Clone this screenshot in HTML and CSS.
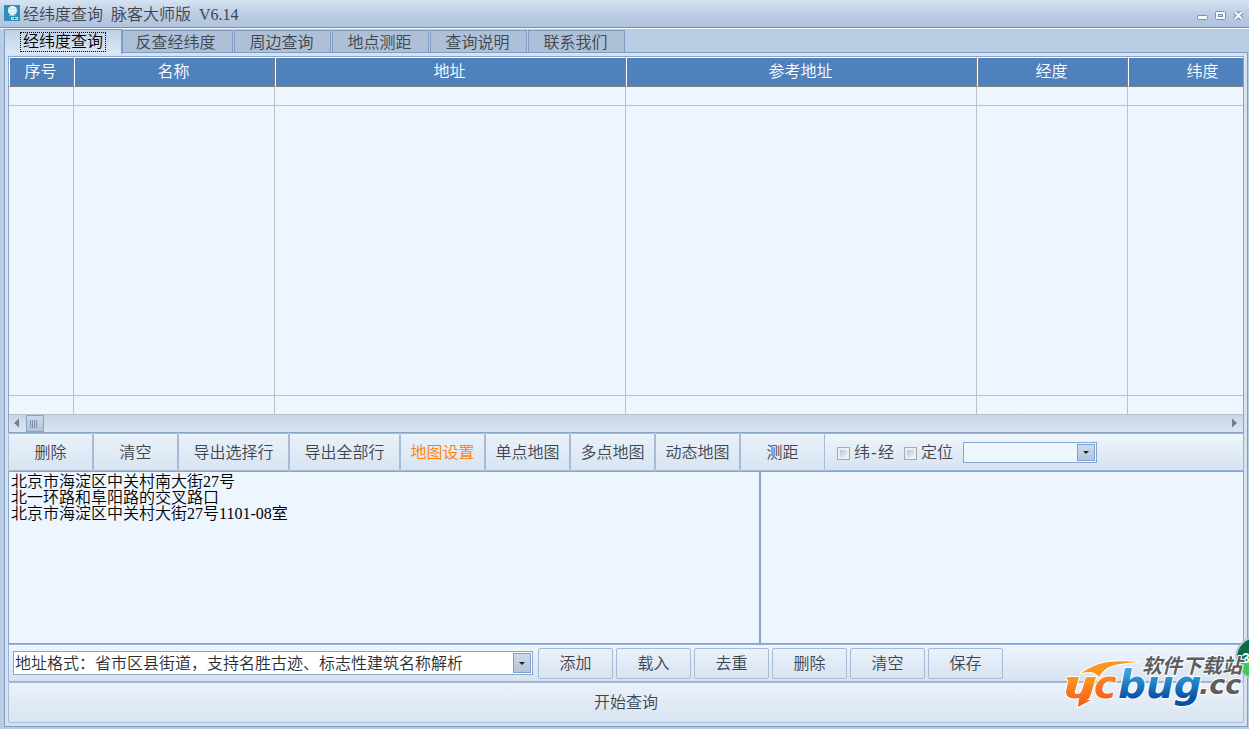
FILE: index.html
```html
<!DOCTYPE html>
<html lang="zh-CN">
<head>
<meta charset="utf-8">
<title>经纬度查询 脉客大师版 V6.14</title>
<link rel="stylesheet" href="styles.css">
</head>
<body>
<div class="window">
  <header class="titlebar">
    <svg class="app-icon" width="16" height="16" viewBox="0 0 16 16" aria-hidden="true">
      <rect width="16" height="16" fill="#2f8fb8"/>
      <circle cx="8.500" cy="5.500" r="4.500" fill="#f2fafc"/>
      <path d="M4.500 4h8M4.500 7h8M7 1.500v8M10 1.500v8" stroke="#b5dbe8" stroke-width=".6"/>
      <path d="M5 10.500h6" stroke="#8cc6da"/>
      <path d="M7.500 12.500h2v2h-2zM11 12.500h2.500v2H11" fill="none" stroke="#d8eef5"/>
    </svg>
    <h1 class="title">经纬度查询  脉客大师版  V6.14</h1>
    <div class="window-buttons">
      <button class="win-btn" aria-label="最小化"><svg width="11" height="9" viewBox="0 0 11 9"><rect x=".5" y="4.500" width="10" height="4" rx="1" fill="#f5f9fd" stroke="#7393b8"/></svg></button>
      <button class="win-btn" aria-label="最大化"><svg width="11" height="9" viewBox="0 0 11 9"><rect x=".5" y=".5" width="10" height="8" rx="1" fill="#f5f9fd" stroke="#7393b8"/><rect x="3.500" y="3.500" width="4" height="2" fill="#c8d8ea" stroke="#7393b8"/></svg></button>
      <button class="win-btn" aria-label="关闭"><svg width="11" height="9" viewBox="0 0 11 9"><path d="M2 1l7 7M9 1L2 8" stroke="#7393b8" stroke-width="4.500"/><path d="M2 1l7 7M9 1L2 8" stroke="#f5f9fd" stroke-width="2.400"/></svg></button>
    </div>
  </header>

  <nav class="tabs" role="tablist">
    <button class="tab tab-active" role="tab" aria-selected="true"><span class="focus">经纬度查询</span></button>
    <button class="tab tab-wide" role="tab">反查经纬度</button>
    <button class="tab" role="tab">周边查询</button>
    <button class="tab" role="tab">地点测距</button>
    <button class="tab" role="tab">查询说明</button>
    <button class="tab" role="tab">联系我们</button>
  </nav>

  <main class="panel">
    <section class="grid">
      <div class="grid-view">
        <table class="results">
          <colgroup><col class="c-no"><col class="c-name"><col class="c-addr"><col class="c-addr"><col class="c-deg"><col class="c-deg"></colgroup>
          <thead><tr><th>序号</th><th>名称</th><th>地址</th><th>参考地址</th><th>经度</th><th>纬度</th></tr></thead>
          <tbody>
            <tr class="row"><td></td><td></td><td></td><td></td><td></td><td></td></tr>
            <tr class="fill"><td></td><td></td><td></td><td></td><td></td><td></td></tr>
            <tr class="row"><td></td><td></td><td></td><td></td><td></td><td></td></tr>
          </tbody>
        </table>
      </div>
      <div class="scrollbar">
        <svg width="16" height="17" viewBox="0 0 16 17"><path d="M10 3.500v9L5 8z" fill="#6c7f8b"/></svg>
        <span class="thumb"></span>
        <svg class="scroll-end" width="16" height="17" viewBox="0 0 16 17"><path d="M5 3.500v9L10 8z" fill="#6c7f8b"/></svg>
      </div>
    </section>

    <div class="toolbar">
      <button class="tool">删除</button>
      <button class="tool">清空</button>
      <button class="tool tool-wide">导出选择行</button>
      <button class="tool tool-wide">导出全部行</button>
      <button class="tool tool-hot">地图设置</button>
      <button class="tool">单点地图</button>
      <button class="tool">多点地图</button>
      <button class="tool">动态地图</button>
      <button class="tool">测距</button>
      <div class="options">
        <label class="check"><input type="checkbox">纬<span class="dash">-</span>经</label>
        <label class="check"><input type="checkbox">定位</label>
        <div class="combo combo-small">
          <select aria-label="定位"><option></option></select>
          <span class="arrow"></span>
        </div>
      </div>
    </div>

    <div class="editors">
      <textarea class="input-list" aria-label="地址列表" spellcheck="false">北京市海淀区中关村南大街27号
北一环路和阜阳路的交叉路口
北京市海淀区中关村大街27号1101-08室</textarea>
      <textarea class="output-list" aria-label="输出" spellcheck="false"></textarea>
    </div>

    <div class="actions">
      <div class="combo combo-format">
        <select aria-label="地址格式"><option>地址格式：省市区县街道，支持名胜古迹、标志性建筑名称解析</option></select>
        <span class="arrow"></span>
      </div>
      <div class="action-buttons">
        <button class="action">添加</button>
        <button class="action">载入</button>
        <button class="action">去重</button>
        <button class="action">删除</button>
        <button class="action">清空</button>
        <button class="action">保存</button>
      </div>
    </div>
    <button class="start">开始查询</button>
  </main>

  <div class="badge">3</div>
  <svg class="logo" width="186" height="60" viewBox="1060 654 186 60" role="img" aria-label="ucbug.cc 软件下载站">
    <defs>
      <linearGradient id="orange" x1="0" y1="0" x2="0" y2="1"><stop offset="0" stop-color="#fb9a1e"/><stop offset="1" stop-color="#f4571e"/></linearGradient>
      <linearGradient id="blue" x1="0" y1="0" x2="0" y2="1"><stop offset=".2" stop-color="#3aa6e0"/><stop offset=".8" stop-color="#0451a5"/></linearGradient>
    </defs>
    <g stroke="#fff" stroke-width="2" stroke-linejoin="round" paint-order="stroke">
      <path d="M1068 677h11l-4 14q-1 3 2 3 4 0 5-4l4-13h10l-5 17q-1 4-4 6h4l-13 7 1-9q-13 2-13-6 0-2 1-5l1-5q1-3-2-3z" fill="url(#orange)"/>
      <text class="logo-word" x="1094" y="698" font-size="38" fill="url(#orange)">c</text>
      <path d="M1081 673q8-5 15-8c13-5 30-4 42-3-12 1-22 2-29 5q-6 3-10 10-3-4-8-5-5 0-10 1z" fill="#fb951e"/>
      <text class="logo-word" x="1118" y="698" font-size="39" fill="url(#blue)">bug</text>
      <text class="logo-word" x="1199" y="694" font-size="27" fill="#5d5e60">.cc</text>
      <text class="logo-site" x="1142" y="673" font-size="20" fill="#5d5e60">软件下载站</text>
    </g>
  </svg>
</div>
</body>
</html>
```
FILE: styles.css
```css
* { box-sizing: border-box; }

body {
  margin: 0;
  font: 16px/20px "Liberation Serif", "Noto Sans CJK SC", sans-serif;
  font-weight: 350;
  color: #40454d;
}

button, select, textarea, input {
  font: inherit;
  color: inherit;
  margin: 0;
  padding: 0;
  border-radius: 0;
}

.window {
  position: relative;
  display: flex;
  flex-direction: column;
  height: 100vh;
  padding-bottom: 2px;
  overflow: hidden;
  background: #b9cce4;
}

.titlebar {
  display: flex;
  align-items: center;
  flex: none;
  height: 29px;
  padding: 0 5px 0 4px;
  background: linear-gradient(#d6e3f2, #b9cbe3 55%, #b0c3dd);
  border-bottom: 1px solid #f4f8fd;
  box-shadow: inset 0 -1px #7191bb;
}
.app-icon { margin-right: 3px; margin-bottom: 2px; }
.title { flex: 1; margin: 0; padding-top: 2px; font-size: 16px; font-weight: inherit; white-space: pre; }
.window-buttons { display: flex; gap: 7px; padding-top: 3px; }
.win-btn { display: flex; border: 0; background: none; }

.tabs { display: flex; flex: none; align-items: flex-end; height: 23px; padding-left: 4px; }
.tab {
  width: 97px;
  height: 22px;
  margin-right: 1px;
  padding: 3px 2px 0 0;
  line-height: 18px;
  background: #adc0d8;
  border: 1px solid #7f9cc4;
  border-bottom: 0;
}
.tab-wide { width: 111px; padding-right: 4px; }
.tab-active {
  position: relative;
  z-index: 1;
  width: 118px;
  height: 25px;
  margin: 0 0 -2px;
  padding: 0;
  color: #000;
  background: linear-gradient(#bfd1e8, #dde8f5);
}
.focus { display: inline-block; width: 86px; height: 20px; line-height: 18px; border: 1px dotted #000; }

.panel {
  display: flex;
  flex: 1;
  flex-direction: column;
  min-height: 0;
  margin: 0 1px 0 4px;
  padding: 3px;
  background: #d6e2f0;
  border: 1px solid #7f9cc4;
}

.grid { display: flex; flex: 1; flex-direction: column; min-height: 0; border: 1px solid #8ca4c4; }
.grid-view { flex: 1; min-height: 0; overflow: hidden; background: #edf5ff; }
.results { width: 1270px; height: 100%; table-layout: fixed; border-spacing: 0; }
.c-no { width: 65px; }
.c-name { width: 201px; }
.c-addr { width: 351px; }
.c-deg { width: 151px; }
.results th {
  height: 30px;
  padding: 0 2px 0 0;
  color: #fff;
  font-weight: inherit;
  background: #4f81bd;
  border-top: 1px solid #fff;
  border-left: 1px solid #fff;
  border-right: 1px solid #808080;
  border-bottom: 1px solid #808080;
}
.results td { padding: 0; border-right: 1px solid #c0c0c0; border-bottom: 1px solid #c0c0c0; }
.row td { height: 19px; }

.scrollbar { display: flex; flex: none; height: 17px; background: linear-gradient(#c7d5e6, #dae5f2); }
.thumb {
  width: 18px;
  margin-left: 1px;
  border: 1px solid #8ca4c4;
  background: repeating-linear-gradient(90deg, #7f92aa 0 1px, transparent 1px 2px) 3px 4px / 8px 8px no-repeat, linear-gradient(#c9d8ea, #b2c5de);
}
.scroll-end { margin-left: auto; }

.toolbar { display: flex; flex: none; height: 38px; background: linear-gradient(#eef5fe, #d7e3f1); }
.tool {
  width: 85px;
  padding-top: 2px;
  background: linear-gradient(#eaf2fb, #d8e4f1);
  border: 1px solid #a9bad5;
  border-radius: 1px;
}
.tool-wide { width: 111px; }
.tool-hot { color: #ff8000; }
.options {
  display: flex;
  flex: 1;
  align-items: center;
  gap: 10px;
  padding-left: 12px;
  border: 1px solid #93b2de;
  border-left: 0;
}
.check { display: flex; align-items: center; padding-top: 2px; }
.check input {
  width: 13px;
  height: 13px;
  margin-right: 4px;
  appearance: none;
  border: 1px solid #a2aab6;
  background: linear-gradient(135deg, #a9c7ee, #f2f2f0) content-box, #eeeeec;
  padding: 2px;
}
.dash { width: 8px; text-align: center; }

.combo { position: relative; background: #edf5ff; border: 1px solid #8ca4c4; }
.combo select { display: block; width: 100%; height: 100%; padding-left: 2px; appearance: none; border: 0; background: none; }
.combo-small { width: 134px; height: 21px; }
.combo-format { width: 520px; height: 24px; background: #fff; }
.combo-format select { padding: 1px 0 0 1px; color: #2a2d32; }
.arrow {
  position: absolute;
  top: 1px;
  right: 1px;
  bottom: 1px;
  width: 18px;
  border: 1px solid #7ba2d6;
  background: linear-gradient(#cddaea, #b3c5dc);
  pointer-events: none;
}
.arrow::after {
  content: "";
  position: absolute;
  inset: 0;
  margin: auto;
  width: 0;
  height: 0;
  border: 3px solid transparent;
  border-top-color: #222;
  border-bottom: 0;
}

.editors { display: flex; flex: none; height: 173px; }
.editors textarea {
  padding: 2px;
  line-height: 16px;
  color: #000;
  background: #edf5ff;
  border: 1px solid #8ca4c4;
  resize: none;
  outline: 0;
}
.input-list { flex: 753; min-width: 0; }
.output-list { flex: 483; min-width: 0; }

.actions {
  display: flex;
  flex: none;
  align-items: center;
  gap: 5px;
  height: 38px;
  padding: 0 4px;
  background: linear-gradient(#eef5fe, #d7e3f1);
  border: 1px solid #93b2de;
}
.action-buttons { display: flex; gap: 3px; }
.action {
  width: 75px;
  height: 31px;
  padding-top: 2px;
  background: linear-gradient(#eaf2fb, #d8e4f1);
  border: 1px solid #a9bad5;
  border-radius: 2px;
}
.start {
  flex: none;
  height: 41px;
  background: linear-gradient(#eaf2fb, #d8e4f1);
  border: 1px solid #a9bad5;
  border-radius: 2px;
}

.badge {
  position: absolute;
  right: -30px;
  bottom: 49px;
  width: 44px;
  height: 44px;
  padding-left: 5px;
  font: bold 14px/40px "Liberation Sans", sans-serif;
  color: #fff;
  background: linear-gradient(#0a6b45 60%, #3ec95a 60%);
  border: 2px solid #b8c4c4;
  border-radius: 50%;
}
.logo { position: absolute; right: 3px; bottom: 15px; pointer-events: none; }
.logo-word { font-family: "DejaVu Sans", sans-serif; font-weight: 700; font-style: italic; }
.logo-site { font-family: "Noto Sans CJK SC", sans-serif; font-weight: 700; font-style: italic; }
```
